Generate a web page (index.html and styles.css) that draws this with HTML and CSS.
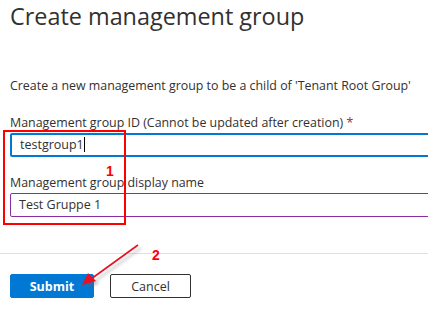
FILE: index.html
```html
<!DOCTYPE html>
<html lang="en">

<head>
    <meta charset="UTF-8">
    <title>Create management group</title>
    <link rel="stylesheet" href="styles.css">
</head>

<body>
    <div class="blade">
        <h1 class="title">Create management group</h1>
        <p class="intro">Create a new management group to be a child of 'Tenant Root Group'</p>

        <div class="field field-id">
            <label class="label">Management group ID (Cannot be updated after creation) <span class="req">*</span></label>
            <div class="input focused">testgroup1<span class="caret"></span></div>
        </div>
        <div class="field field-name">
            <label class="label">Management group display name</label>
            <div class="input hovered">Test Gruppe 1</div>
        </div>

        <div class="footer">
            <button class="btn primary">Submit</button>
            <button class="btn">Cancel</button>
        </div>

        <!-- annotations -->
        <div class="mark-box"></div>
        <span class="mark-num num1">1</span>
        <span class="mark-num num2">2</span>
        <svg class="mark-arrow" width="80" height="60" viewBox="0 0 80 60">
            <defs>
                <filter id="sh" x="-20%" y="-20%" width="140%" height="140%">
                    <feGaussianBlur stdDeviation="1.5"/>
                </filter>
            </defs>
            <g transform="translate(3,3)" opacity="0.35" filter="url(#sh)">
                <line x1="57" y1="2" x2="10" y2="36" stroke="#666" stroke-width="2"/>
                <polygon points="1,42 7,30 15,38" fill="#666"/>
            </g>
            <line x1="57" y1="2" x2="10" y2="36" stroke="#e81123" stroke-width="1.6"/>
            <polygon points="1,42 7,30 15,38" fill="#e81123"/>
        </svg>
    </div>
</body>

</html>
```

FILE: styles.css
```css
body {
    margin: 0;
    padding: 0;
    background: #fff;
    font-family: "Open Sans", "Noto Sans", sans-serif;
    color: #323130;
    overflow: hidden;
}

.blade {
    position: relative;
    width: 428px;
    height: 316px;
    overflow: hidden;
}

.title {
    margin: 0;
    padding: 2px 0 0 10px;
    font-size: 23.4px;
    font-weight: 400;
    line-height: 28px;
    color: #323130;
}

.intro {
    margin: 47px 0 0 10px;
    font-size: 12.4px;
    line-height: 18px;
}

.field {
    margin-left: 10px;
}

.field-id {
    margin-top: 19px;
}

.field-name {
    margin-top: 17px;
}

.label {
    display: block;
    font-size: 12.4px;
    line-height: 18px;
    margin-bottom: 1px;
}

.req {
    color: #a4262c;
}

.input {
    width: 440px;
    height: 24px;
    box-sizing: border-box;
    border: 1px solid #8a2da5;
    border-radius: 2px;
    padding-left: 8px;
    font-size: 12.5px;
    line-height: 22px;
    color: #323130;
}

.input.focused {
    border: 2px solid #0078d4;
    line-height: 20px;
}

.caret {
    display: inline-block;
    width: 1px;
    height: 15px;
    background: #000;
    vertical-align: -3px;
}

.footer {
    margin-top: 36px;
    border-top: 1px solid #e1dfdd;
    padding: 20px 0 0 10px;
    display: flex;
    gap: 16px;
}

.btn {
    font-family: inherit;
    height: 24px;
    box-sizing: border-box;
    border: 1px solid #323130;
    border-radius: 2px;
    background: #fff;
    color: #323130;
    font-size: 12.5px;
    padding: 0;
    width: 81px;
}

.btn.primary {
    width: 84px;
    background: #0078d4;
    border-color: #0078d4;
    color: #fff;
    font-weight: 700;
}

/* annotations drawn over the form */
.mark-box {
    position: absolute;
    left: 3px;
    top: 130px;
    width: 119px;
    height: 91px;
    border: 2px solid #ff0000;
}

.mark-num {
    position: absolute;
    color: #ff0000;
    font-family: "Liberation Sans", Arial, sans-serif;
    font-weight: 700;
    font-size: 14px;
    line-height: 14px;
}

.num1 {
    left: 106px;
    top: 164px;
}

.num2 {
    left: 152px;
    top: 248px;
}

.mark-arrow {
    position: absolute;
    left: 81px;
    top: 243px;
}
```
